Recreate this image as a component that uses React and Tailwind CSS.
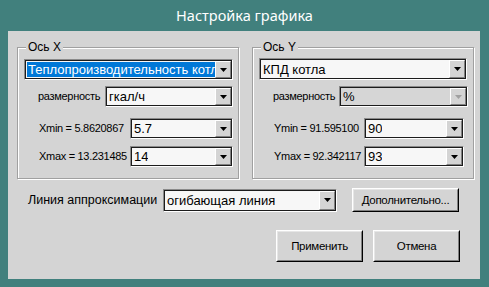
import React from "react";

const sans = { fontFamily: '"Liberation Sans", Arial, sans-serif' };

function Arrow({ disabled }) {
  return (
    <div className="w-[16px] h-full flex items-center justify-center bg-[#d4d4d4] border-t border-l border-t-[#ffffff] border-l-[#ffffff] border-b border-r border-b-[#808080] border-r-[#808080] shrink-0">
      <svg width="7" height="4" viewBox="0 0 7 4">
        <path d="M0 0H7L3.5 4Z" fill={disabled ? "#a0a0a0" : "#000"} />
      </svg>
    </div>
  );
}

function Combo({ text, w, h = 21, selected, disabled, className = "" }) {
  return (
    <div
      className={`flex border-t border-l border-t-[#8a8a8a] border-l-[#8a8a8a] border-b border-r border-b-[#ffffff] border-r-[#ffffff] shrink-0 ${className}`}
      style={{ width: w, height: h }}
    >
      <div className={`flex flex-1 min-w-0 border border-[#1c1c1c] ${disabled ? "bg-[#d6d6d6]" : "bg-[#f7f7f7]"}`}>
        <div className="flex-1 min-w-0 flex items-center pl-[1px] overflow-hidden">
          <span
            className={`text-[13px] leading-[15px] whitespace-nowrap overflow-hidden ${selected ? "bg-[#0078d7] text-white pl-[1px] w-full" : "text-black pl-[1px]"}`}
            style={sans}
          >
            {text}
          </span>
        </div>
        <Arrow disabled={disabled} />
      </div>
    </div>
  );
}

function Group({ title, children }) {
  return (
    <div className="relative w-[222px] h-[132px] border border-[#a0a0a0] shadow-[inset_1px_1px_0_#ffffff,1px_1px_0_#ffffff]">
      <span
        className="absolute -top-[8px] left-[8px] px-[2px] bg-[#d4d4d4] text-[12px] leading-[14px] text-black whitespace-nowrap"
        style={sans}
      >
        {title}
      </span>
      {children}
    </div>
  );
}

function Label({ children, pl }) {
  return (
    <span className={`${pl} text-[11px] tracking-[-0.3px] leading-[13px] text-black whitespace-nowrap shrink-0`} style={sans}>
      {children}
    </span>
  );
}

function Button({ children, w, h, className = "" }) {
  return (
    <div
      className={`flex border-b border-r border-b-[#000] border-r-[#000] border-t border-l border-t-[#ffffff] border-l-[#ffffff] shrink-0 ${className}`}
      style={{ width: w, height: h }}
    >
      <div className="flex-1 flex items-center justify-center border-b border-r border-b-[#808080] border-r-[#808080] border-t border-l border-t-[#e6e6e6] border-l-[#e6e6e6] bg-[#d4d4d4]">
        <span className="text-[11.5px] tracking-[-0.3px] text-black leading-[13px] whitespace-nowrap" style={sans}>
          {children}
        </span>
      </div>
    </div>
  );
}

export default function App() {
  return (
    <div className="w-[489px] h-[287px] bg-[#41807d] flex flex-col">
      <div
        className="h-[31px] flex items-center justify-center text-white text-[14.5px] pt-[1px]"
        style={{ fontFamily: '"Noto Sans", "Open Sans", sans-serif' }}
      >
        Настройка графика
      </div>
      <div className="ml-[8px] w-[472px] h-[248px] bg-[#d4d4d4] flex flex-col">
        <div className="flex gap-[13px] pl-[9px] pt-[16px]">
          <Group title="Ось X">
            <div className="flex flex-col pl-[6px] pr-[5px] pt-[11px]">
              <Combo text="Теплопроизводительность котла" w={209} selected />
              <div className="flex items-center mt-[6px]">
                <Label pl="pl-[14px]">размерность</Label>
                <Combo text="гкал/ч" w={128} className="ml-auto" />
              </div>
              <div className="flex items-center mt-[11px]">
                <Label pl="pl-[15px]">Xmin = 5.8620867</Label>
                <Combo text="5.7" w={103} className="ml-auto" />
              </div>
              <div className="flex items-center mt-[7px]">
                <Label pl="pl-[15px]">Xmax = 13.231485</Label>
                <Combo text="14" w={103} className="ml-auto" />
              </div>
            </div>
          </Group>
          <Group title="Ось Y">
            <div className="flex flex-col pl-[6px] pt-[10px]">
              <Combo text="КПД котла" w={208} h={22} />
              <div className="flex items-center mt-[6px]">
                <Label pl="pl-[14px]">размерность</Label>
                <Combo text="%" w={129} className="ml-auto mr-[5px]" disabled />
              </div>
              <div className="flex items-center mt-[11px]">
                <Label pl="pl-[15px]">Ymin = 91.595100</Label>
                <Combo text="90" w={100} className="ml-auto mr-[9px]" />
              </div>
              <div className="flex items-center mt-[7px]">
                <Label pl="pl-[15px]">Ymax = 92.342117</Label>
                <Combo text="93" w={100} className="ml-auto mr-[9px]" />
              </div>
            </div>
          </Group>
        </div>
        <div className="flex items-center mt-[9px] pl-[20px]">
          <span className="text-[12.5px] text-black w-[135px] whitespace-nowrap shrink-0" style={sans}>Линия аппроксимации</span>
          <Combo text="огибающая линия" w={174} h={23} />
          <Button w={107} h={24} className="ml-[15px]">Дополнительно...</Button>
        </div>
        <div className="flex mt-[18px] pl-[268px] gap-[10px]">
          <Button w={87} h={32}>Применить</Button>
          <Button w={87} h={32}>Отмена</Button>
        </div>
      </div>
    </div>
  );
}
